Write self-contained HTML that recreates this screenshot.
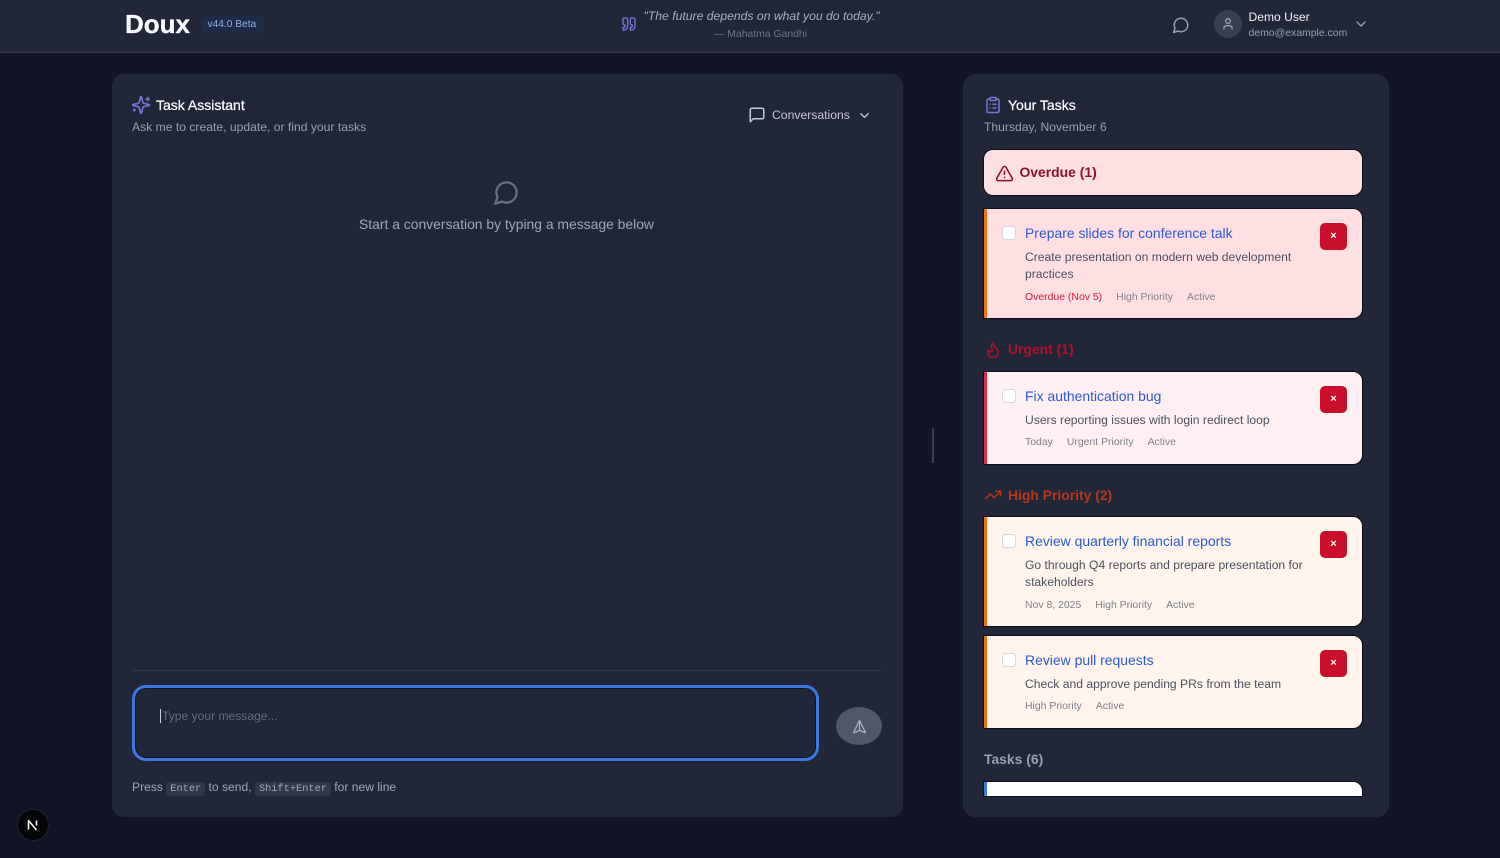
<!DOCTYPE html>
<html lang="en"><head><meta charset="utf-8"><title>Doux</title>
<style>
*{box-sizing:border-box}
html,body{margin:0;padding:0;width:1500px;height:858px;overflow:hidden;background:#111526;font-family:"Liberation Sans",Arial,sans-serif}
#w{position:absolute;left:0;top:0;width:1500px;height:858px;filter:blur(.3px)}
.a{position:absolute}
.t{position:absolute;white-space:nowrap;line-height:1}
svg{position:absolute;fill:none;stroke-linecap:round;stroke-linejoin:round;stroke-width:2}
.panel{position:absolute;background:#212739;border-radius:12px}
.card{position:absolute;left:984px;width:378px;border-radius:0 9px 9px 0;box-shadow:0 0 0 1px #0d101c,0 1px 1px #0d101c;overflow:hidden}
.bar{position:absolute;left:0;top:0;bottom:0;width:3px}
.cb{position:absolute;left:17.5px;top:17px;width:14px;height:14px;background:#fff;border:1.5px solid #d5d7e0;border-radius:3.5px}
.del{position:absolute;left:336px;top:14px;width:27px;height:27px;background:#c90f29;border-radius:5px;color:#fff;font-size:11px;font-weight:700;text-align:center;line-height:27px}
.ti{position:absolute;left:41px;top:16px;font-size:13.95px;line-height:16px;color:#2b59d8;white-space:nowrap}
.de{position:absolute;left:41px;font-size:12.13px;line-height:17px;color:#4b5060;white-space:nowrap}
.me{position:absolute;left:41px;font-size:10.45px;line-height:12px;color:#7d808c;white-space:nowrap}
.me span{margin-right:14px}
code{font-family:"Liberation Mono",monospace;font-size:10.3px;background:#31374a;border-radius:3px;padding:1px 4px;color:#a4a8b8}
</style></head><body><div id="w">

<!-- header -->
<div class="a" style="left:0;top:0;width:1500px;height:53px;background:#212739;border-bottom:1px solid #33394b"></div>
<div class="t" style="left:125px;top:11px;font-size:26px;font-weight:700;color:#fbfbff;-webkit-text-stroke:.3px #fbfbff">Doux</div>
<div class="a" style="left:202px;top:16px;width:62px;height:17px;background:#1e2c4a;border-radius:5px"></div>
<div class="t" style="left:207.5px;top:20px;font-size:10.2px;color:#8fb1e6">v44.0 Beta</div>
<svg style="left:621px;top:16px" width="16" height="16" viewBox="0 0 24 24" stroke="#7a73d6"><path d="M16 3a2 2 0 0 0-2 2v6a2 2 0 0 0 2 2 1 1 0 0 1 1 1v1a2 2 0 0 1-2 2 1 1 0 0 0-1 1v2a1 1 0 0 0 1 1 6 6 0 0 0 6-6V5a2 2 0 0 0-2-2z"/><path d="M5 3a2 2 0 0 0-2 2v6a2 2 0 0 0 2 2 1 1 0 0 1 1 1v1a2 2 0 0 1-2 2 1 1 0 0 0-1 1v2a1 1 0 0 0 1 1 6 6 0 0 0 6-6V5a2 2 0 0 0-2-2z"/></svg>
<div class="t" style="left:643.5px;top:10px;font-size:12.2px;font-style:italic;color:#a9adbd">"The future depends on what you do today."</div>
<div class="t" style="left:714px;top:30px;font-size:10.4px;color:#6d7284">— Mahatma Gandhi</div>
<svg style="left:1172px;top:16px" width="18" height="18" viewBox="0 0 24 24" stroke="#9a9fb0"><path d="M7.9 20A9 9 0 1 0 4 16.100L2 22Z"/></svg>
<div class="a" style="left:1214px;top:10px;width:28px;height:28px;border-radius:50%;background:#3a4052"></div>
<svg style="left:1221px;top:17px" width="14" height="14" viewBox="0 0 24 24" stroke="#a9adbc"><path d="M19 21v-2a4 4 0 0 0-4-4H9a4 4 0 0 0-4 4v2"/><circle cx="12" cy="7" r="4"/></svg>
<div class="t" style="left:1248.5px;top:11px;font-size:12.1px;color:#f2f3f8">Demo User</div>
<div class="t" style="left:1248.5px;top:29px;font-size:10.45px;color:#9a9fb0">demo@example.com</div>
<svg style="left:1353px;top:16px" width="16" height="16" viewBox="0 0 24 24" stroke="#9a9fb0"><path d="m6 9 6 6 6-6"/></svg>

<!-- left panel -->
<div class="panel" style="left:112px;top:74px;width:791px;height:743px"></div>
<svg style="left:130.5px;top:95px" width="20" height="20" viewBox="0 0 24 24" stroke="#7a73d6"><path d="M9.937 15.500A2 2 0 0 0 8.500 14.063l-6.135-1.582a.5.5 0 0 1 0-.962L8.500 9.936A2 2 0 0 0 9.937 8.500l1.582-6.135a.5.5 0 0 1 .963 0L14.063 8.500A2 2 0 0 0 15.500 9.937l6.135 1.581a.5.5 0 0 1 0 .964L15.500 14.063a2 2 0 0 0-1.437 1.437l-1.582 6.135a.5.5 0 0 1-.963 0z"/><path d="M20 3v4M22 5h-4M4 17v2M5 18H3"/></svg>
<div class="t" style="left:156px;top:98px;font-size:14px;color:#fafbff;-webkit-text-stroke:.25px #fafbff">Task Assistant</div>
<div class="t" style="left:132px;top:121px;font-size:12.15px;color:#9a9eae">Ask me to create, update, or find your tasks</div>
<svg style="left:748px;top:106px" width="18" height="18" viewBox="0 0 24 24" stroke="#c5c8d6"><path d="M21 15a2 2 0 0 1-2 2H7l-4 4V5a2 2 0 0 1 2-2h14a2 2 0 0 1 2 2z"/></svg>
<div class="t" style="left:772px;top:109px;font-size:12.2px;color:#c5c8d6">Conversations</div>
<svg style="left:856.500px;top:108px" width="15" height="15" viewBox="0 0 24 24" stroke="#c5c8d6"><path d="m6 9 6 6 6-6"/></svg>
<svg style="left:492.500px;top:178.500px" width="27" height="27" viewBox="0 0 24 24" stroke="#697082"><path d="M7.9 20A9 9 0 1 0 4 16.100L2 22Z"/></svg>
<div class="t" style="left:359px;top:218px;font-size:13.9px;color:#a1a5b5">Start a conversation by typing a message below</div>

<div class="a" style="left:132px;top:670px;width:749px;height:1px;background:#34394b"></div>
<div class="a" style="left:132px;top:685px;width:687px;height:76px;border:3px solid #3b78e0;border-radius:14px;background:#212739;box-shadow:inset 0 0 0 1px #10131f"></div>
<div class="a" style="left:160px;top:709px;width:1px;height:14px;background:#c9ccd6"></div>
<div class="t" style="left:162px;top:710px;font-size:12.1px;color:#666c7e">Type your message...</div>
<div class="a" style="left:836px;top:707px;width:46px;height:38px;border-radius:50%;background:#515768"></div>
<svg style="left:851.500px;top:721.500px;transform:rotate(-45deg)" width="15" height="15" viewBox="0 0 24 24" stroke="#aeb2c0"><path d="M14.536 21.686a.5.5 0 0 0 .937-.024l6.500-19a.496.496 0 0 0-.635-.635l-19 6.500a.5.5 0 0 0-.024.937l7.930 3.180a2 2 0 0 1 1.112 1.110z"/><path d="m21.854 2.147-10.940 10.939"/></svg>
<div class="t" style="left:132px;top:779.500px;font-size:12.1px;line-height:14px;color:#a1a5b5">Press <code>Enter</code> to send, <code>Shift+Enter</code> for new line</div>

<div class="a" style="left:932px;top:428px;width:2px;height:35px;background:#3a4052"></div>

<!-- right panel -->
<div class="panel" style="left:963px;top:74px;width:426px;height:743px"></div>
<svg style="left:983.500px;top:95.500px" width="18" height="18" viewBox="0 0 24 24" stroke="#7a73d6"><rect x="8" y="2" width="8" height="4" rx="1"/><path d="M16 4h2a2 2 0 0 1 2 2v14a2 2 0 0 1-2 2H6a2 2 0 0 1-2-2V6a2 2 0 0 1 2-2h2"/><path d="M12 11h4M12 16h4M8 11h.01M8 16h.01"/></svg>
<div class="t" style="left:1008px;top:98px;font-size:14px;color:#fafbff;-webkit-text-stroke:.25px #fafbff">Your Tasks</div>
<div class="t" style="left:984px;top:121px;font-size:12.15px;color:#9a9eae">Thursday, November 6</div>

<div class="a" style="left:984px;top:150px;width:378px;height:45px;background:#ffdfe2;border-radius:9px;box-shadow:0 0 0 1px #0d101c"></div>
<svg style="left:994.500px;top:163.500px" width="19" height="19" viewBox="0 0 24 24" stroke="#8e1028"><path d="m21.730 18-8-14a2 2 0 0 0-3.480 0l-8 14A2 2 0 0 0 4 21h16a2 2 0 0 0 1.730-3"/><path d="M12 9v4M12 17h.01"/></svg>
<div class="t" style="left:1019.5px;top:166px;font-size:13.9px;font-weight:700;color:#8e1028">Overdue (1)</div>

<div class="card" style="top:209px;height:109px;background:#ffdfe2"><div class="bar" style="background:#f3701a"></div><div class="cb"></div><div class="del">×</div>
<div class="ti">Prepare slides for conference talk</div>
<div class="de" style="top:40px">Create presentation on modern web development<br>practices</div>
<div class="me" style="top:83px"><span style="color:#d3203c">Overdue (Nov 5)</span><span>High Priority</span><span>Active</span></div></div>

<svg style="left:984px;top:341px" width="18" height="18" viewBox="0 0 24 24" stroke="#b3102b"><path d="M8.500 14.500A2.500 2.500 0 0 0 11 12c0-1.380-.5-2-1-3-1.072-2.143-.224-4.054 2-6 .5 2.500 2 4.900 4 6.500 2 1.600 3 3.500 3 5.500a7 7 0 1 1-14 0c0-1.153.433-2.294 1-3a2.500 2.500 0 0 0 2.500 2.500z"/></svg>
<div class="t" style="left:1008px;top:343px;font-size:13.9px;font-weight:700;color:#b3102b">Urgent (1)</div>

<div class="card" style="top:372px;height:92px;background:#fff0f4"><div class="bar" style="background:#e8274b"></div><div class="cb"></div><div class="del">×</div>
<div class="ti">Fix authentication bug</div>
<div class="de" style="top:40px">Users reporting issues with login redirect loop</div>
<div class="me" style="top:65px"><span>Today</span><span>Urgent Priority</span><span>Active</span></div></div>

<svg style="left:984px;top:486px" width="18" height="18" viewBox="0 0 24 24" stroke="#b8381a"><path d="M22 7 13.500 15.500 8.500 10.500 2 17"/><path d="M16 7h6v6"/></svg>
<div class="t" style="left:1008px;top:489px;font-size:13.9px;font-weight:700;color:#b8381a">High Priority (2)</div>

<div class="card" style="top:517px;height:109px;background:#fff5ec"><div class="bar" style="background:#f3701a"></div><div class="cb"></div><div class="del">×</div>
<div class="ti">Review quarterly financial reports</div>
<div class="de" style="top:40px">Go through Q4 reports and prepare presentation for<br>stakeholders</div>
<div class="me" style="top:83px"><span>Nov 8, 2025</span><span>High Priority</span><span>Active</span></div></div>

<div class="card" style="top:636px;height:92px;background:#fff5ec"><div class="bar" style="background:#f3701a"></div><div class="cb"></div><div class="del">×</div>
<div class="ti">Review pull requests</div>
<div class="de" style="top:40px">Check and approve pending PRs from the team</div>
<div class="me" style="top:65px"><span>High Priority</span><span>Active</span></div></div>

<div class="t" style="left:984px;top:753px;font-size:13.9px;font-weight:700;color:#9a9eae">Tasks (6)</div>
<div class="a" style="left:984px;top:782px;width:378px;height:14px;background:#fff;border-radius:0 9px 0 0;box-shadow:0 0 0 1px #0d101c;overflow:hidden"><div class="bar" style="background:#3b78e0"></div></div>

<!-- next badge -->
<div class="a" style="left:18px;top:810px;width:30px;height:30px;border-radius:50%;background:#050608;box-shadow:0 0 0 1px #1f2433"></div>
<svg style="left:26px;top:818px" width="14" height="14" viewBox="0 0 14 14" stroke="#f2f2f2"><path d="M2.500 11.500V2.500L10.500 12M10.500 2.500v5" stroke-width="1.6" stroke-linecap="butt"/></svg>
</div></body></html>
